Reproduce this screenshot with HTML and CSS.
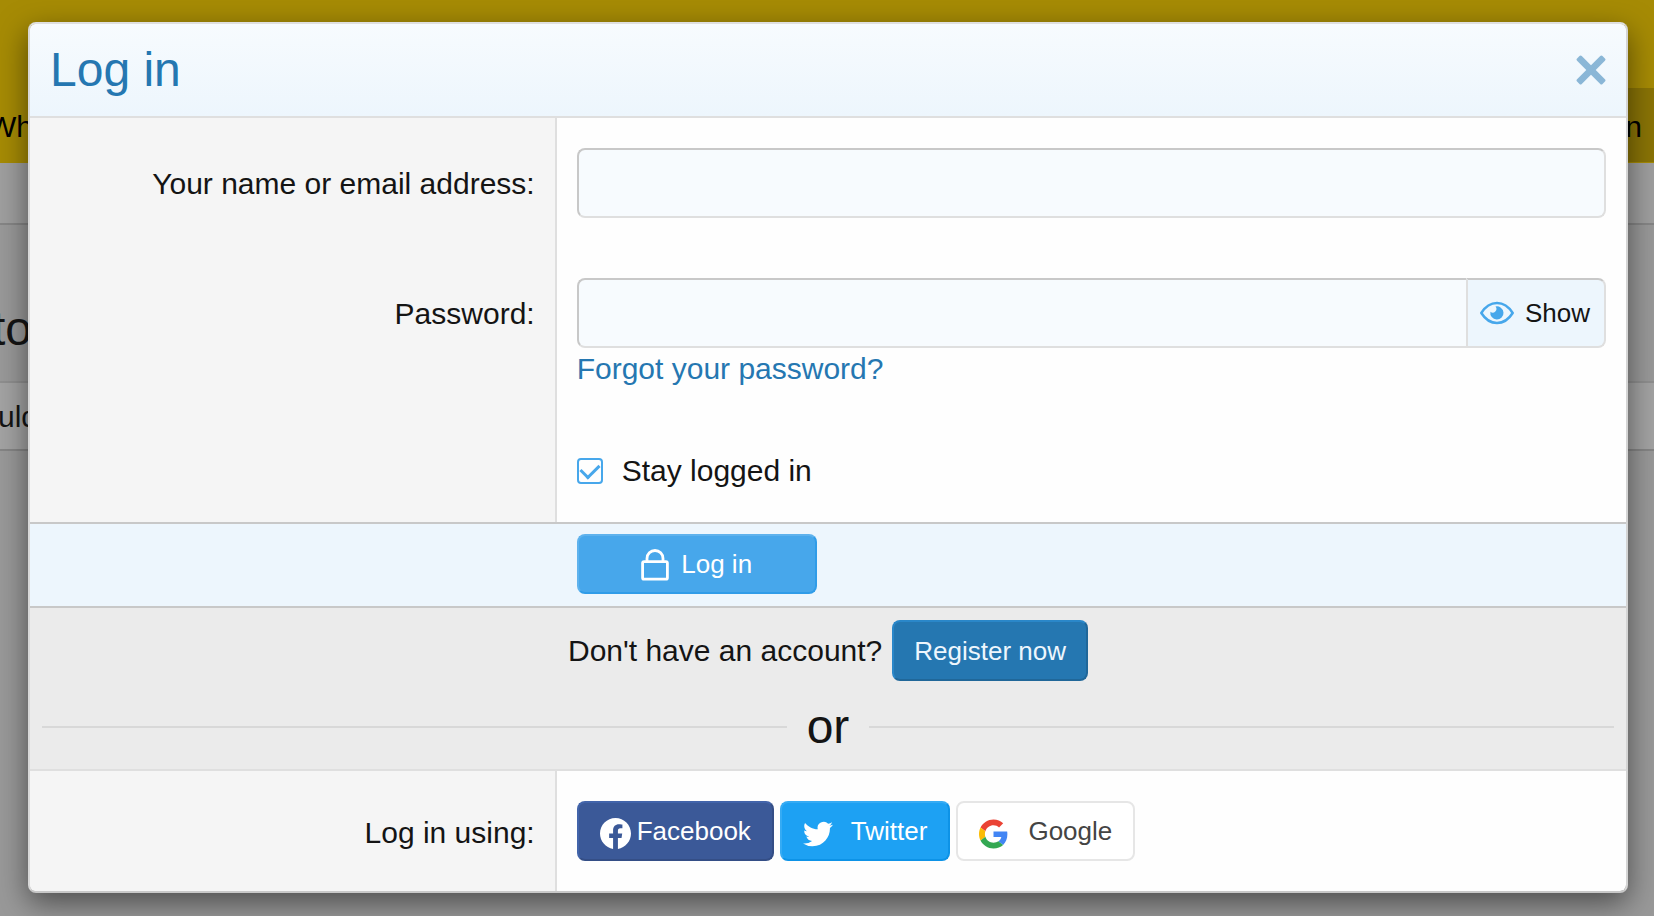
FILE: index.html
```html
<!DOCTYPE html>
<html lang="en">
<head>
    <meta charset="UTF-8">
    <meta name="viewport" content="width=device-width, initial-scale=1.0">
    <title>Log in</title>
    <link rel="stylesheet" href="styles.css">
</head>
<body>
    <!-- Dimmed page -->
    <div class="page">
        <header class="page-header">
            <nav class="page-nav">
                <span class="nav-item">Wh</span>
                <span class="nav-login">n</span>
            </nav>
        </header>
        <div class="page-subnav"></div>
        <div class="page-title">to</div>
        <div class="page-notice">uld</div>
    </div>

    <!-- Login overlay -->
    <div class="overlay-container">
        <div class="overlay" role="dialog" aria-labelledby="overlay-title">
            <div class="overlay-title">
                <h2 id="overlay-title">Log in</h2>
                <button type="button" class="overlay-close" aria-label="Close">
                    <svg width="30" height="30" viewBox="0 0 30 30" fill="currentColor">
                        <rect x="-3" y="11.700" width="36" height="6.600" rx="1.600" transform="rotate(45 15 15)"/>
                        <rect x="-3" y="11.700" width="36" height="6.600" rx="1.600" transform="rotate(-45 15 15)"/>
                    </svg>
                </button>
            </div>

            <form>
                <div class="form-row">
                    <div class="form-label"><label for="login">Your name or email address:</label></div>
                    <div class="form-field">
                        <input type="text" class="input" id="login" name="login">
                    </div>
                </div>
                <div class="form-row">
                    <div class="form-label"><label for="password">Password:</label></div>
                    <div class="form-field">
                        <div class="input-group">
                            <input type="password" class="input" id="password" name="password">
                            <button type="button" class="show-button">
                                <svg width="34" height="24" viewBox="0 0 34 24">
                                    <path d="M1.300 12C5.500 5.300 10.800 2 17 2S28.500 5.300 32.700 12C28.500 18.700 23.200 22 17 22S5.500 18.700 1.300 12Z" fill="none" stroke="currentColor" stroke-width="2.500" stroke-linejoin="round"/>
                                    <path d="M15.500 5.500A6.600 6.600 0 1 1 10.400 10.800A3.700 3.700 0 0 0 15.500 5.500Z" fill="currentColor"/>
                                </svg>
                                <span>Show</span>
                            </button>
                        </div>
                        <a href="#" class="forgot">Forgot your password?</a>
                    </div>
                </div>
                <div class="form-row">
                    <div class="form-label"></div>
                    <div class="form-field">
                        <label class="check"><input type="checkbox" name="remember" checked> Stay logged in</label>
                    </div>
                </div>
                <div class="submit-row">
                    <div class="submit-field">
                        <button type="submit" class="button button-primary">
                            <svg width="28" height="32" viewBox="0 0 28 32" fill="none" stroke="currentColor" stroke-width="2.800">
                                <rect x="1.600" y="12.600" width="24.800" height="17.600" rx="1.500"/>
                                <path d="M6 12.500V9.500a8 8 0 0 1 16 0V12.500"/>
                            </svg>
                            Log in
                        </button>
                    </div>
                </div>
            </form>

            <div class="register">
                <div class="register-line">
                    <span>Don't have an account?</span>
                    <a href="#" class="button button-register">Register now</a>
                </div>
                <div class="or"><span>or</span></div>
            </div>

            <div class="form-row">
                <div class="form-label form-label-button">Log in using:</div>
                <div class="form-field providers">
                    <a href="#" class="button button-facebook">
                        <svg width="31" height="31" viewBox="0 0 24 24"><path fill="#fff" d="M24 12.073c0-6.627-5.373-12-12-12s-12 5.373-12 12c0 5.990 4.388 10.954 10.125 11.854v-8.385H7.078v-3.470h3.047V9.430c0-3.007 1.792-4.669 4.533-4.669 1.312 0 2.686.235 2.686.235v2.953H15.830c-1.491 0-1.956.925-1.956 1.874v2.250h3.328l-.532 3.470h-2.796v8.385C19.612 23.027 24 18.062 24 12.073z"/></svg>
                        Facebook
                    </a>
                    <a href="#" class="button button-twitter">
                        <svg width="30" height="30" viewBox="0 0 24 24"><path fill="#fff" d="M23.953 4.570a10 10 0 0 1-2.825.775 4.958 4.958 0 0 0 2.163-2.723c-.951.555-2.005.959-3.127 1.184a4.920 4.920 0 0 0-8.384 4.482C7.690 8.095 4.067 6.130 1.640 3.162a4.822 4.822 0 0 0-.666 2.475c0 1.710.870 3.213 2.188 4.096a4.904 4.904 0 0 1-2.228-.616v.060a4.923 4.923 0 0 0 3.946 4.827 4.996 4.996 0 0 1-2.212.085 4.936 4.936 0 0 0 4.604 3.417 9.867 9.867 0 0 1-6.102 2.105c-.390 0-.779-.023-1.170-.067a13.995 13.995 0 0 0 7.557 2.209c9.053 0 13.998-7.496 13.998-13.985 0-.210 0-.420-.015-.630A9.935 9.935 0 0 0 24 4.590z"/></svg>
                        Twitter
                    </a>
                    <a href="#" class="button button-google">
                        <svg width="29" height="30" viewBox="0 0 48 48">
                            <path fill="#ea4335" d="M24 9.500c3.540 0 6.710 1.220 9.210 3.600l6.850-6.850C35.900 2.380 30.470 0 24 0 14.620 0 6.510 5.380 2.560 13.220l7.980 6.190C12.430 13.720 17.740 9.500 24 9.500z"/>
                            <path fill="#4285f4" d="M46.980 24.550c0-1.570-.150-3.090-.380-4.550H24v9.020h12.940c-.580 2.960-2.260 5.480-4.780 7.180l7.730 6c4.510-4.180 7.090-10.360 7.090-17.650z"/>
                            <path fill="#fbbc05" d="M10.530 28.590c-.480-1.450-.760-2.990-.760-4.590s.270-3.140.760-4.590l-7.980-6.190C.920 16.460 0 20.120 0 24s.920 7.540 2.560 10.780l7.970-6.190z"/>
                            <path fill="#34a853" d="M24 48c6.480 0 11.930-2.130 15.890-5.810l-7.730-6c-2.150 1.450-4.920 2.300-8.160 2.300-6.260 0-11.570-4.220-13.470-9.910l-7.980 6.190C6.510 42.620 14.620 48 24 48z"/>
                        </svg>
                        Google
                    </a>
                </div>
            </div>
        </div>
    </div>
</body>
</html>
```

FILE: styles.css
```css
* {
    box-sizing: border-box;
}

body {
    margin: 0;
    min-height: 100vh;
    font-family: "Helvetica Neue", Helvetica, "Liberation Sans", Arial, sans-serif;
    font-size: 30px;
    line-height: 42px;
    color: #141414;
    background: #999;
    overflow: hidden;
}

a {
    color: #2577b1;
    text-decoration: none;
}

button, input {
    font-family: inherit;
    margin: 0;
}

svg {
    display: block;
    flex: none;
}

/* Page behind the overlay */
.page {
    position: absolute;
    top: 0;
    left: 0;
    right: 0;
    overflow: hidden;
}

.page-header {
    padding-top: 88px;
    background: #a68b05;
}

.page-nav {
    display: flex;
    justify-content: space-between;
    height: 75px;
    color: #000;
}

.nav-item {
    margin-left: -12px;
    padding-top: 18px;
}

.nav-login {
    padding: 18px 12px 0 24px;
    background: #8a7406;
    border-bottom: 1px solid #a68b05;
}

.page-subnav {
    height: 62px;
    background: #9f9f9f;
    border-bottom: 2px solid #868686;
}

.page-title {
    height: 156px;
    margin-left: -8px;
    padding-top: 70px;
    font-size: 48px;
    line-height: 68px;
}

.page-notice {
    height: 70px;
    padding-top: 13px;
    background: #a3a3a3;
    border-top: 2px solid #8f8f8f;
    border-bottom: 2px solid #858585;
    text-indent: -2px;
}

/* Overlay */
.overlay-container {
    position: absolute;
    inset: 0;
    padding: 22px 26px 22px 28px;
}

.overlay {
    border: 2px solid;
    border-color: #dfdfdf #d4d4d4 #c8c8c8 #d8d8d8;
    border-radius: 8px;
    background: #fefefe;
    background-clip: padding-box;
    box-shadow: 0 10px 30px rgba(0, 0, 0, 0.5);
}

.overlay-title {
    display: flex;
    align-items: center;
    justify-content: space-between;
    padding: 12px 20px;
    color: #2577b1;
    background: linear-gradient(#f7fbfe, #edf6fd);
    border-bottom: 2px solid #dfdfdf;
    border-radius: 6px 6px 0 0;
}

.overlay-title h2 {
    margin: 0;
    font-size: 48px;
    font-weight: 400;
    line-height: 68px;
}

.overlay-close {
    padding: 0;
    border: 0;
    background: none;
    color: #2577b1;
    opacity: 0.5;
    cursor: pointer;
}

.form-row {
    display: flex;
}

.form-label {
    width: 33%;
    padding: 45px 20px 0;
    text-align: right;
    background: #f5f5f5;
    border-right: 2px solid #dfdfdf;
}

.form-label-button {
    padding-top: 41px;
    border-radius: 0 0 0 6px;
}

.form-field {
    flex: 1;
    padding: 30px 20px;
}

.input {
    display: block;
    width: 100%;
    height: 70px;
    padding: 10px;
    font-size: 30px;
    color: #141414;
    background: #f7fbfe;
    border: 2px solid;
    border-color: #c8c8c8 #dfdfdf #dfdfdf #c8c8c8;
    border-radius: 8px;
}

.input-group {
    display: flex;
}

.input-group .input {
    flex: 1;
    border-right-width: 0;
    border-radius: 8px 0 0 8px;
}

.show-button {
    display: flex;
    align-items: center;
    gap: 11px;
    padding: 0 14px 0 12px;
    font-size: 26px;
    color: #141414;
    background: #edf6fd;
    border: 2px solid #dfdfdf;
    border-top-color: #c8c8c8;
    border-radius: 0 8px 8px 0;
    cursor: pointer;
}

.show-button svg {
    color: #47a7eb;
}

.forgot {
    display: block;
}

.check {
    display: flex;
    align-items: center;
    gap: 19px;
}

.check input {
    display: grid;
    place-items: center;
    width: 26px;
    height: 26px;
    padding-bottom: 4px;
    appearance: none;
    border: 2px solid #47a7eb;
    border-radius: 4px;
}

.check input:checked::after {
    content: "";
    width: 15px;
    height: 9px;
    border: solid #47a7eb;
    border-width: 0 0 3px 3px;
    transform: rotate(-45deg);
}

.submit-row {
    padding: 10px 0 12px 33%;
    background: #edf6fd;
    border-top: 2px solid #c8c8c8;
    border-bottom: 2px solid #c8c8c8;
}

.submit-field {
    padding-left: 20px;
}

/* Buttons */
.button {
    display: inline-flex;
    align-items: center;
    justify-content: center;
    height: 60px;
    padding: 0 21px;
    font-size: 26px;
    line-height: 36px;
    color: #fff;
    border: 2px solid;
    border-radius: 8px;
    cursor: pointer;
}

.button svg {
    margin-top: 2px;
}

.button-primary {
    gap: 12px;
    min-width: 240px;
    background: #47a7eb;
    border-color: #5eb2ed #309ce8 #309ce8 #5eb2ed;
}

.button-register {
    height: 61px;
    padding: 0 20px;
    color: #edf6fd;
    background: #2577b1;
    border-color: #2a87c9 #206799 #206799 #2a87c9;
}

.button-facebook {
    gap: 6px;
    background: #3b5998;
    border-color: #4264aa #344e86 #344e86 #4264aa;
}

.button-twitter {
    gap: 18px;
    background: #1da1f3;
    border-color: #35abf4 #0d93e7 #0d93e7 #35abf4;
}

.button-google {
    gap: 20px;
    color: #444;
    background: #fff;
    border-color: #e6e6e6;
}

.providers .button svg {
    margin-top: 5px;
}

/* Register block */
.register {
    padding: 12px 12px 8px;
    background: #ebebeb;
    border-bottom: 2px solid #dfdfdf;
}

.register-line {
    display: flex;
    align-items: center;
    justify-content: center;
    gap: 10px;
    margin-bottom: 12px;
}

.or {
    display: flex;
    align-items: center;
    gap: 20px;
    font-size: 48px;
    line-height: 68px;
}

.or::before,
.or::after {
    content: "";
    flex: 1;
    height: 2px;
    background: #d8d8d8;
}

.providers {
    display: flex;
    gap: 6px;
}
```
